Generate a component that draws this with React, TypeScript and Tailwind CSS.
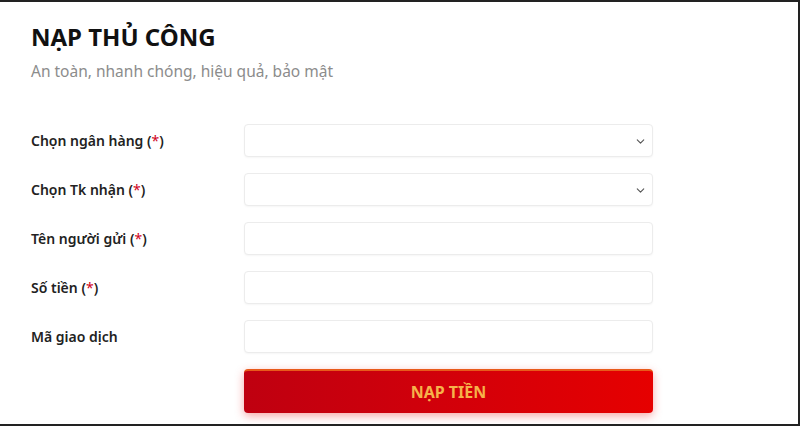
import React from 'react';
import { ChevronDown } from 'lucide-react';

type Field = { label: string; required: boolean; select: boolean };

const fields: Field[] = [
  { label: 'Chọn ngân hàng', required: true, select: true },
  { label: 'Chọn Tk nhận', required: true, select: true },
  { label: 'Tên người gửi', required: true, select: false },
  { label: 'Số tiền', required: true, select: false },
  { label: 'Mã giao dịch', required: false, select: false },
];

export default function App() {
  return (
    <div className="w-[800px] h-[426px] bg-white border-t-2 border-r-2 border-b-2 border-[#222] overflow-hidden font-['Noto_Sans',sans-serif]">
      <div className="pl-[31px] pt-[20px]">
        {/* Heading */}
        <h1 className="text-[24px] leading-[30px] font-bold text-[#111]">NẠP THỦ CÔNG</h1>
        <p className="mt-[9px] text-[15.5px] leading-[20px] text-[#8c8c8c]">An toàn, nhanh chóng, hiệu quả, bảo mật</p>

        {/* Form */}
        <div className="mt-[43px] flex flex-col gap-[16px]">
          {fields.map((f) => (
            <div key={f.label} className="flex items-center">
              <label className="w-[213px] text-[14px] font-semibold text-[#222]">
                {f.label}
                {f.required && (
                  <span>
                    {' '}(<span className="text-[#d0021b] font-normal">*</span>)
                  </span>
                )}
              </label>
              <div className="relative w-[409px] h-[33px] rounded-[4px] border border-[#ececec] bg-white shadow-[0_1px_2px_rgba(0,0,0,0.04)]">
                {f.select && (
                  <ChevronDown className="absolute right-[5px] top-[10px] w-[13px] h-[13px] text-[#555]" strokeWidth={2} />
                )}
              </div>
            </div>
          ))}
        </div>

        <div className="flex mt-[16px]">
          <div className="w-[213px]" />
          <button className="w-[409px] h-[44px] rounded-[4px] border-t-2 border-[#e85a1a] bg-gradient-to-r from-[#bf0010] to-[#e60000] shadow-[0_3px_10px_rgba(230,0,0,0.35)] text-[16px] font-bold text-[#f6b24a]">
            NẠP TIỀN
          </button>
        </div>
      </div>
    </div>
  );
}
